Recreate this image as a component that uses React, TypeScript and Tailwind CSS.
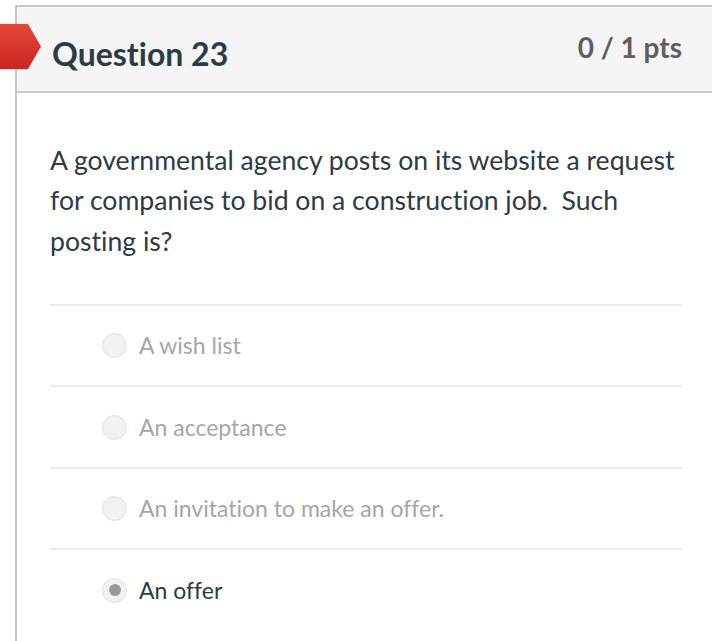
import React from "react";

const options = [
  { label: "A wish list", selected: false },
  { label: "An acceptance", selected: false },
  { label: "An invitation to make an offer.", selected: false },
  { label: "An offer", selected: true },
];

function Flag() {
  return (
    <svg
      className="absolute left-0 top-[24px]"
      width="42"
      height="45"
      viewBox="0 0 42 45"
    >
      <defs>
        <linearGradient id="flagFill" x1="0" y1="0" x2="0" y2="1">
          <stop offset="0" stopColor="#e8473c" />
          <stop offset="1" stopColor="#c8261f" />
        </linearGradient>
      </defs>
      <path d="M0 0 H28 L41 22.5 L28 45 H0 Z" fill="url(#flagFill)" />
    </svg>
  );
}

function Radio({ selected }: { selected: boolean }) {
  return (
    <span className="flex h-[25px] w-[25px] shrink-0 items-center justify-center rounded-full border border-[#e4e4e4] bg-[#f1f1f1]">
      {selected && <span className="h-[12px] w-[12px] rounded-full bg-[#9a9a9a]" />}
    </span>
  );
}

export default function App() {
  return (
    <div className="relative flex h-[641px] flex-col overflow-hidden bg-white font-['Lato','Liberation_Sans',sans-serif] [font-variant-ligatures:none]">
      <Flag />
      <div className="ml-[15px] mt-[5px] flex-1 border-l-2 border-t-2 border-[#c6c6c6]">
        <div className="flex h-[86px] items-center justify-between border-b-2 border-[#cacaca] bg-[#f5f5f5] pl-[35px] pr-[30px]">
          <h2 className="mt-[9px] text-[32px] font-bold text-[#2d3b45]">Question 23</h2>
          <span className="mb-[4px] text-[28px] font-bold text-[#5e5e5e]">0 / 1 pts</span>
        </div>
        <div className="pl-[33px] pr-[30px] pt-[47px]">
          <p className="text-[26.6px] leading-[40.3px] text-[#2d3b45]">
            A governmental agency posts on its website a request for companies to bid on a
            construction job.&nbsp; Such posting is?
          </p>
          <div className="mt-[43px]">
            {options.map((o) => (
              <div
                key={o.label}
                className="flex h-[81.5px] items-center gap-[12px] border-t-2 border-[#ececec] pl-[52px]"
              >
                <Radio selected={o.selected} />
                <span
                  className={
                    o.selected
                      ? "text-[23px] text-[#2d3b45]"
                      : "text-[23px] text-[#a6a6a6]"
                  }
                >
                  {o.label}
                </span>
              </div>
            ))}
          </div>
        </div>
      </div>
    </div>
  );
}
